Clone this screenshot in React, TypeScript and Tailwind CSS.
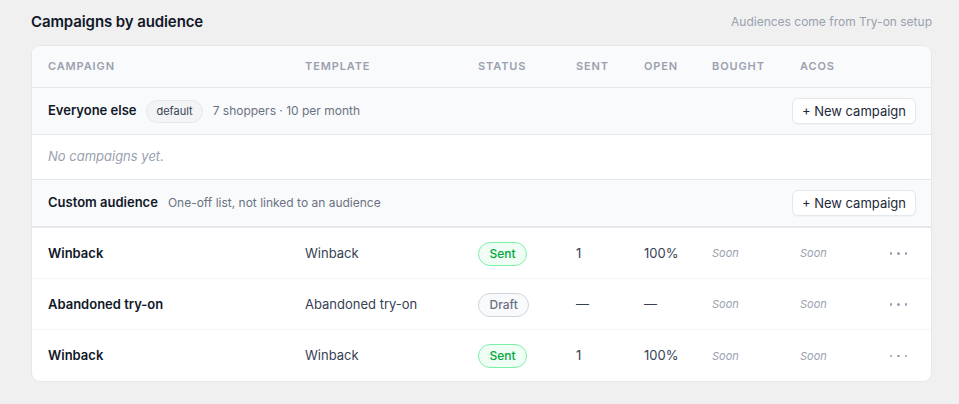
import React from 'react';

type Row = { name: string; template: string; status: 'Sent' | 'Draft'; sent: string; open: string };

const rows: Row[] = [
  { name: 'Winback', template: 'Winback', status: 'Sent', sent: '1', open: '100%' },
  { name: 'Abandoned try-on', template: 'Abandoned try-on', status: 'Draft', sent: '—', open: '—' },
  { name: 'Winback', template: 'Winback', status: 'Sent', sent: '1', open: '100%' },
];

const cols = 'grid grid-cols-[273px_173px_98px_68px_68px_88px_1fr] items-center';

function NewCampaign() {
  return (
    <button className="h-[26px] rounded-md border border-gray-200 bg-white px-[9px] text-[13px] text-gray-800 shadow-[0_1px_1px_rgba(0,0,0,0.03)]">
      + New campaign
    </button>
  );
}

function Status({ s }: { s: Row['status'] }) {
  return s === 'Sent' ? (
    <span className="inline-flex h-[24px] items-center rounded-full border border-green-300 bg-green-50 px-[10.5px] text-[12px] font-medium text-green-600">Sent</span>
  ) : (
    <span className="inline-flex h-[24px] items-center rounded-full border border-gray-300 bg-gray-50 px-[10.5px] text-[12px] font-medium text-gray-500">Draft</span>
  );
}

function Dots() {
  return (
    <div className="flex items-center justify-end gap-[5px] pr-[24px]">
      <span className="h-[2.5px] w-[2.5px] rounded-full bg-gray-400" />
      <span className="h-[2.5px] w-[2.5px] rounded-full bg-gray-400" />
      <span className="h-[2.5px] w-[2.5px] rounded-full bg-gray-400" />
    </div>
  );
}

export default function App() {
  return (
    <div className="min-h-[404px] w-[959px] bg-[#f0f0f0] pl-[31px] pr-[27px] pt-[11px] font-['Inter',sans-serif] text-gray-900">
      <div className="flex h-[22px] items-center justify-between">
        <h2 className="text-[15px] font-semibold tracking-[-0.1px] text-gray-900">Campaigns by audience</h2>
        <span className="text-[12px] text-gray-400">Audiences come from Try-on setup</span>
      </div>

      <div className="mt-[12px] w-[901px] overflow-hidden rounded-[9px] border border-gray-200 bg-white">
        <div className={`${cols} h-[42px] border-b border-gray-200 bg-gray-50 text-[11px] font-semibold uppercase tracking-[0.08em] text-gray-400`}>
          <div className="pl-[16px]">Campaign</div>
          <div>Template</div>
          <div>Status</div>
          <div>Sent</div>
          <div>Open</div>
          <div>Bought</div>
          <div>Acos</div>
        </div>

        <div className="flex h-[47px] items-center border-b border-gray-200 bg-gray-50 pl-[16px] pr-[15px]">
          <span className="text-[13px] font-semibold">Everyone else</span>
          <span className="ml-[10px] inline-flex h-[23px] items-center rounded-full border border-gray-200 bg-gray-100 px-[9px] text-[11px] text-gray-700">default</span>
          <span className="ml-[10px] text-[12px] text-gray-500">7 shoppers · 10 per month</span>
          <div className="ml-auto"><NewCampaign /></div>
        </div>

        <div className="flex h-[45px] items-center border-b border-gray-200 pl-[16px] text-[13px] italic text-gray-400">
          No campaigns yet.
        </div>

        <div className="flex h-[48px] items-center border-b-2 border-gray-200 bg-gray-50 pl-[16px] pr-[15px]">
          <span className="text-[13px] font-semibold">Custom audience</span>
          <span className="ml-[10px] text-[12px] text-gray-500">One-off list, not linked to an audience</span>
          <div className="ml-auto"><NewCampaign /></div>
        </div>

        {rows.map((r, i) => (
          <div key={i} className={`${cols} h-[51px] ${i < rows.length - 1 ? 'border-b border-gray-100' : ''} pt-[1px] text-[13px]`}>
            <div className="pl-[16px] font-semibold text-gray-900">{r.name}</div>
            <div className="text-gray-700">{r.template}</div>
            <div><Status s={r.status} /></div>
            <div className="text-gray-700">{r.sent}</div>
            <div className="text-gray-700">{r.open}</div>
            <div className="text-[11px] italic text-gray-400">Soon</div>
            <div className="grid grid-cols-[1fr_auto] items-center">
              <span className="text-[11px] italic text-gray-400">Soon</span>
              <Dots />
            </div>
          </div>
        ))}
      </div>
    </div>
  );
}
